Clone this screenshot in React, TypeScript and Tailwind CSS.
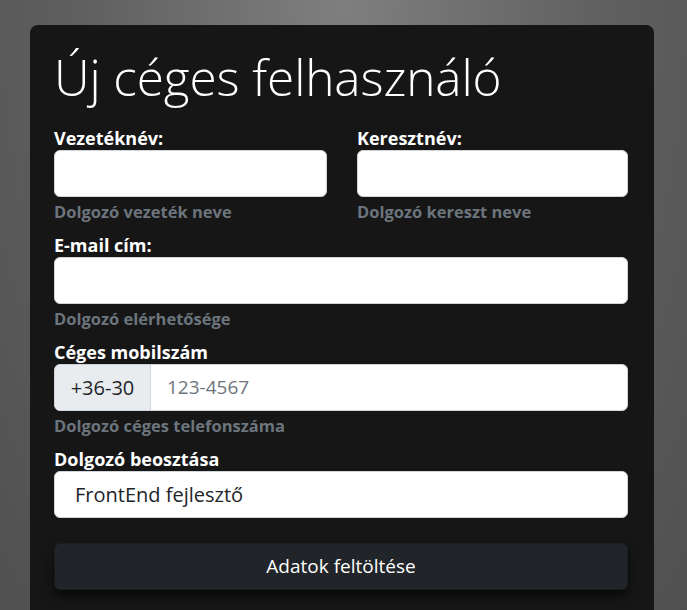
export default function App() {
  return (
    <div className="h-[610px] w-full overflow-hidden bg-[radial-gradient(ellipse_at_top,#7f7f7f_0%,#5f5f5f_55%,#505050_100%)] font-['Open_Sans',sans-serif]">
      <div className="ml-[30px] mt-[25px] w-[624px] rounded-lg bg-[#161616] pb-10 pl-6 pr-[26px] pt-[24px]">
        <h1 className="text-[49.5px] font-light leading-[56px] tracking-[-0.1px] text-white">Új céges felhasználó</h1>

        <div className="mt-[21px] grid grid-cols-[273px_271px] gap-x-[30px]">
          <Field label="Vezetéknév:" help="Dolgozó vezeték neve">
            <input className="h-[47px] w-full rounded-md border border-[#ced4da] bg-white px-4 text-xl outline-none" />
          </Field>
          <Field label="Keresztnév:" help="Dolgozó kereszt neve">
            <input className="h-[47px] w-full rounded-md border border-[#ced4da] bg-white px-4 text-xl outline-none" />
          </Field>
        </div>

        <Field label="E-mail cím:" help="Dolgozó elérhetősége">
          <input className="h-[47px] w-full rounded-md border border-[#ced4da] bg-white px-4 text-xl outline-none" />
        </Field>

        <Field label="Céges mobilszám" help="Dolgozó céges telefonszáma">
          <div className="flex h-[47px] w-full overflow-hidden rounded-md border border-[#ced4da] bg-white">
            <span className="flex w-[96px] shrink-0 items-center justify-center border-r border-[#ced4da] bg-[#e9ecef] text-xl text-[#212529]">
              +36-30
            </span>
            <input
              placeholder="123-4567"
              className="min-w-0 flex-1 px-4 text-[19px] text-[#212529] outline-none placeholder:text-[#6c757d]"
            />
          </div>
        </Field>

        <label className="block h-6 text-[18px] font-bold leading-6 text-white">Dolgozó beosztása</label>
        <input
          defaultValue="FrontEnd fejlesztő"
          className="h-[47px] w-full rounded-md border border-[#ced4da] bg-white px-5 text-xl text-[#212529] outline-none"
        />

        <button className="mt-[25px] h-[47px] w-full rounded-md border border-[#1a1e21] bg-[#212529] text-[19px] text-white shadow-[0_6px_10px_rgba(0,0,0,0.6)]">
          Adatok feltöltése
        </button>
      </div>
    </div>
  );
}

function Field({ label, help, children }: { label: string; help: string; children: React.ReactNode }) {
  return (
    <div className="mb-[9px]">
      <label className="block h-6 text-[18px] font-bold leading-6 text-white">{label}</label>
      {children}
      <div className="mt-[3px] h-6 text-[16.5px] font-bold leading-6 text-[#6c757d]">{help}</div>
    </div>
  );
}
